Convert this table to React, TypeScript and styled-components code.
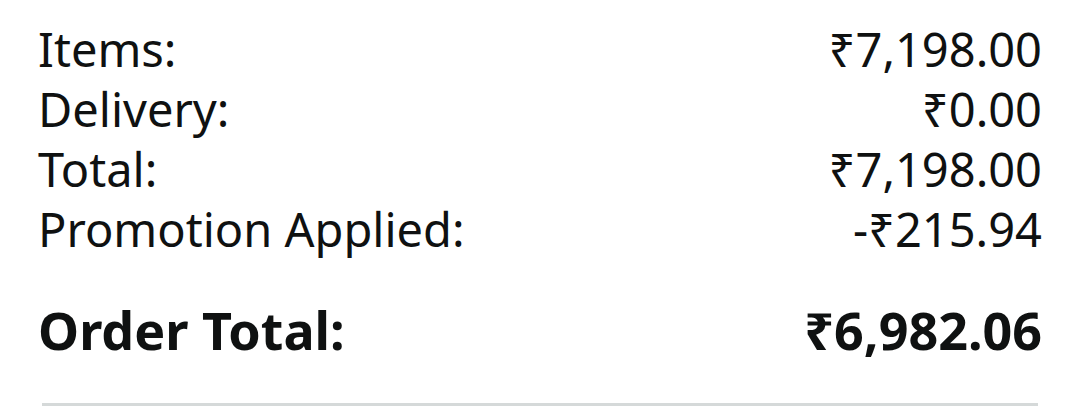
import styled, { createGlobalStyle } from "styled-components"

const GlobalStyle = createGlobalStyle`
  html, body {
    margin: 0;
    padding: 0;
    background: #ffffff;
  }
  body {
    font-family: "Noto Sans", "DejaVu Sans", sans-serif;
    color: #0f1111;
  }
`

type Line = {
  label: string
  value: string
}

const lines: Array<Line> = [
  { label: "Items:", value: "₹7,198.00" },
  { label: "Delivery:", value: "₹0.00" },
  { label: "Total:", value: "₹7,198.00" },
  { label: "Promotion Applied:", value: "-₹215.94" },
]

const Summary = styled.div`
  width: 1080px;
  height: 406px;
  box-sizing: border-box;
  padding: 19px 38px 0 38px;
  display: flex;
  flex-direction: column;
  overflow: hidden;
`

const Row = styled.div<{ $strong?: boolean }>`
  display: flex;
  justify-content: space-between;
  align-items: baseline;
  font-size: ${({ $strong }) => ($strong ? "52px" : "47px")};
  font-weight: ${({ $strong }) => ($strong ? 700 : 400)};
  line-height: 60px;
  height: 60px;
  white-space: nowrap;
`

const Label = styled.span``

const Value = styled.span``

const TotalBlock = styled.div`
  margin-top: 41px;
`

const Divider = styled.hr`
  margin: 43px 4px 0 4px;
  border: none;
  height: 3px;
  background: #d5d9d9;
`

const App = () => {
  return (
    <>
      <GlobalStyle />
      <Summary>
        {lines.map((line) => (
          <Row key={line.label}>
            <Label>{line.label}</Label>
            <Value>{line.value}</Value>
          </Row>
        ))}
        <TotalBlock>
          <Row $strong>
            <Label>Order Total:</Label>
            <Value>₹6,982.06</Value>
          </Row>
        </TotalBlock>
        <Divider />
      </Summary>
    </>
  )
}

export default App
